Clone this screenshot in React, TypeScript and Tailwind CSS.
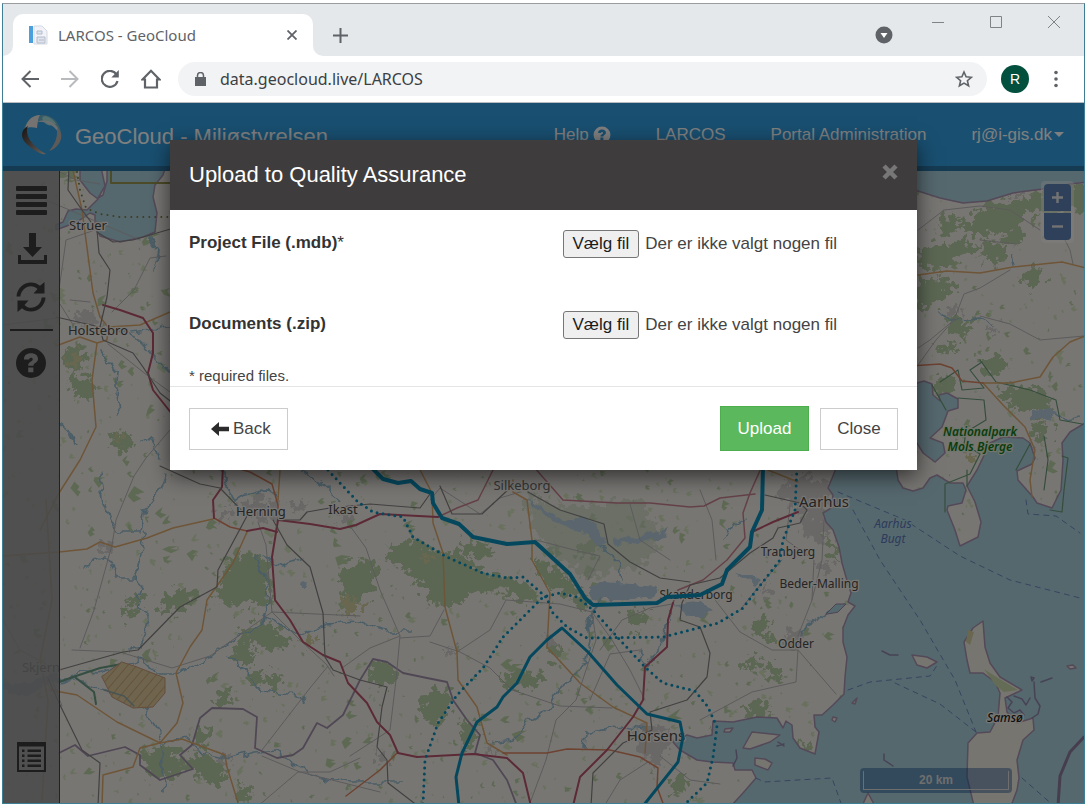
import { useRef, useState } from "react";
import type { ReactNode } from "react";

/* ---------- map data ---------- */

const seaShapes = [
  "M837 466L828 488L833 495L831 508L823 513L826 522L833 530L839 547L842 563L846 577L851 593L848 602L855 606L848 615L843 628L843 642L847 657L845 677L844 694L833 705L822 715L814 715L815 727L819 732L815 754L800 748L793 738L792 725L786 721L783 728L777 718L757 717L733 722L713 721L712 735L697 738L687 735L673 742L680 750L697 760L712 762L733 763L735 770L752 770L756 778L743 793L731 806L1090 806L1090 420L1070 432L1062 443L1063 460L1061 490L1052 508L1037 503L1033 497L1018 480L1017 471L1032 464L1035 458L1030 443L1023 438L1003 437L990 443L977 470L967 486L975 502L981 522L978 537L960 546L955 530L947 510L948 506L962 503L966 490L963 483L950 483L937 475L930 478L923 488L913 491L903 488L898 480L896 466Z",
  "M900 384L917 383L924 381L932 384L933 395L940 401L939 395L947 393L958 399L958 408L948 411L942 427L930 438L943 443L945 453L935 462L923 453L917 443L900 440Z",
  "M900 182L918 191L940 198L963 203L987 201L1013 193L1027 191L1043 189L1070 184L1090 182L1090 165L900 165Z",
  "M80 166L80 180L90 193L98 199L87 210L76 209L68 211L63 222L56 225L56 230L77 222L90 213L95 215L95 227L100 236L120 242L143 237L155 232L157 213L153 197L155 185L163 175L166 166L107 166L107 181L103 195L98 198L105 186L102 172L101 166Z",
];

const islandShapes = [
  "M983 621L973 628L964 642L967 660L970 673L983 673L995 682L1000 693L998 717L990 732L977 733L968 743L967 777L974 806L1011 806L1017 790L1019 778L1017 760L1023 740L1034 730L1033 718L1017 723L1007 712L1005 698L1022 690L1000 677L990 663L985 647Z",
  "M912 655L927 657L937 662L927 668L917 665Z",
  "M752 732L780 735L770 742L750 749L743 748Z",
  "M755 758L765 759L772 763L768 770L755 765Z",
  "M868 793L875 806L862 806Z",
  "M1067 666L1073 665L1076 668L1070 669Z",
  "M725 729L733 728L730 732L724 732Z",
  "M852 703L857 698L855 704Z",
  "M833 717L837 718L835 722L832 720Z",
];

const coastDetails = [
  "M882 651L890 655L898 655",
  "M884 754L884 760L893 766",
  "M1034 682L1035 698L1040 706L1038 714L1032 718M1041 682L1052 678M1031 677L1034 678L1032 681Z",
  "M736 750L737 758L733 766",
  "M778 742L784 746M777 746L784 744",
  "M1007 697L1012 702L1008 708L1014 713L1020 710L1024 715M1014 696L1022 699L1026 705L1030 698",
];

const urbanAreas = [
  "M76 315L90 310L99 318L97 326L84 325L74 321Z",
  "M240 502L262 497L280 505L278 520L258 522L243 514Z",
  "M288 502L304 503L301 512L291 510Z",
  "M336 514L352 512L352 522L340 524Z",
  "M218 510L232 509L229 519L219 518Z",
  "M96 545L110 543L112 552L100 556Z",
  "M790 478L826 480L832 500L820 512L830 526L824 542L808 540L800 528L806 516L790 506L778 490Z",
  "M822 560L834 564L828 574L818 570Z",
  "M785 632L800 628L804 644L788 650Z",
  "M764 585L773 588L768 596L761 592Z",
  "M645 724L672 730L668 752L652 768L640 750L634 740Z",
  "M450 645L458 650L450 656L444 652Z",
  "M546 634L556 642L548 650L543 642Z",
  "M488 742L498 746L492 754L486 750Z",
  "M946 308L958 304L960 314L948 316Z",
  "M988 328L998 326L996 336L988 334Z",
  "M1010 192L1024 190L1020 197L1012 197Z",
  "M1018 438L1030 444L1028 452L1024 446Z",
  "M216 754L232 752L230 761L218 760Z",
  "M376 748L388 752L384 766L376 760Z",
];

const forests = [
  "M236 557L259 555L268 566L268 590L266 604L245 601L232 608L218 592L226 582L228 566Z",
  "M75 380L88 378L97 386L90 396L76 394L70 386Z",
  "M66 350L80 346L84 362L76 374L68 366Z",
  "M112 436L127 432L135 444L124 452L114 446Z",
  "M164 600L180 590L196 592L190 604L170 610L162 614Z",
  "M122 610L136 607L132 618L120 614Z",
  "M128 596L144 598L140 608L130 602Z",
  "M146 752L166 748L180 756L192 768L162 779L146 772Z",
  "M186 756L206 758L228 770L216 784L198 774Z",
  "M238 783L251 794L246 803L238 803Z",
  "M243 632L262 620L278 632L290 640L280 650L262 644L248 646Z",
  "M235 648L246 646L256 656L248 664L238 660Z",
  "M248 674L258 672L262 682L252 684Z",
  "M219 693L229 691L228 704L218 702Z",
  "M195 728L206 732L207 746L196 744Z",
  "M270 672L282 680L276 690L266 684Z",
  "M392 546L416 540L430 550L460 556L480 572L500 576L522 584L536 594L528 604L510 590L486 590L470 590L462 602L446 604L430 604L426 588L414 582L404 566L388 562Z",
  "M344 568L372 560L376 576L370 592L354 602L342 590Z",
  "M534 560L548 566L560 574L572 582L590 600L584 610L566 592L548 586L540 572Z",
  "M462 542L486 546L496 552L484 556L464 552Z",
  "M630 612L646 614L648 624L636 628L628 622Z",
  "M548 640L562 648L560 660L552 658Z",
  "M500 676L528 672L542 676L534 686L508 688Z",
  "M372 666L388 664L398 674L390 684L376 680L368 676Z",
  "M421 698L444 690L452 704L446 716L430 724L424 712Z",
  "M464 722L477 734L472 746L462 744Z",
  "M670 780L684 776L686 788L674 794Z",
  "M576 548L596 540L590 556L580 554Z",
  "M750 624L768 618L762 630L774 638L756 634Z",
  "M746 660L758 656L756 668L744 668Z",
  "M765 660L776 668L784 678L772 678Z",
  "M744 708L758 702L772 712L760 718L746 714Z",
  "M940 222L956 214L958 228L944 232Z",
  "M918 254L938 246L964 242L976 244L962 256L950 264L936 268L918 266Z",
  "M918 282L938 278L956 284L944 298L926 308L918 300Z",
  "M960 226L990 206L1030 200L1040 206L1020 216L1014 230L1024 236L1016 244L994 232L976 234Z",
  "M984 244L1004 244L1000 262L984 260Z",
  "M1030 196L1074 186L1090 188L1090 208L1060 210L1040 214Z",
  "M1022 274L1036 270L1042 280L1028 286Z",
  "M950 318L972 324L966 336L952 332Z",
  "M978 360L1000 356L1004 370L986 376Z",
  "M1000 386L1030 388L1052 396L1048 414L1022 410L1006 400Z",
  "M1034 424L1048 424L1044 440L1034 436Z",
  "M936 346L952 344L956 350L940 354Z",
  "M932 384L950 376L958 384L948 392L936 392Z",
  "M826 538L836 548L840 562L832 552Z",
  "M800 742L814 752L808 752Z",
  "M720 725L730 735L716 738L714 728Z",
];

const heaths = [
  "M344 596L362 604L356 616L342 612Z",
  "M75 350L80 362L76 370L70 360Z",
  "M114 436L126 434L122 446Z",
  "M302 638L318 636L312 646L300 644Z",
  "M420 552L436 560L426 562Z",
  "M964 456L974 454L972 464L966 462Z",
];

const lakes = [
  "M590 586L604 582L632 584L660 586L656 596L622 600L600 600L590 596Z",
  "M610 540L634 536L650 534L668 528L664 536L640 542L614 544Z",
  "M525 498L545 510L564 520L590 520L598 530L606 544L598 546L588 534L572 530L550 520L534 508Z",
  "M678 604L700 602L714 608L704 616L688 616L680 612Z",
  "M1032 410L1050 408L1056 414L1044 420L1032 420Z",
  "M300 582L308 580L306 586L299 586Z",
  "M734 572L748 574L762 580L756 586L744 578Z",
  "M3 685L30 682L60 668L58 680L30 692L3 692Z",
];

const rivers = [
  "M59 680L72 678L80 670L98 672L122 666L142 658L158 672L176 672L206 662L226 644L248 632L264 622L268 605L266 578L256 556",
  "M59 682L76 678L100 690L120 694L136 704L148 710L155 728L164 742L188 738L200 752L230 758L256 752L276 750L290 762L320 778L350 782L400 782",
  "M100 475L104 505L118 532L140 532L144 510L160 490L166 475",
  "M144 532L140 560L134 578L118 578L106 556L84 568",
  "M134 578L144 590L138 606L150 618L144 640L132 652",
  "M220 470L234 500L244 494L264 490L278 496",
  "M226 656L244 670L260 692L300 696L304 704",
  "M262 556L280 566L300 560",
  "M264 616L300 636L326 624L360 622L386 632L412 632",
  "M102 350L110 362L118 372L116 396L118 412",
  "M120 330L140 340L170 372M130 332L150 330L170 324",
  "M150 238L158 250L154 272",
  "M59 424L70 432L76 444",
  "M140 438L152 440L160 460",
  "M162 744L164 790",
  "M300 472L320 482L340 500",
  "M494 744L514 740L528 722L548 708L558 690L572 678L586 660L590 640L588 620L600 600",
  "M585 748L586 734L620 726L646 730",
  "M845 605L836 607L826 614L808 624L800 636",
  "M746 520L730 526L724 538",
  "M940 314L956 320L980 318L994 326",
  "M1012 254L1014 264",
  "M1054 416L1066 420L1078 416",
  "M600 546L618 560L622 580",
  "M640 650L648 668L664 636L672 612",
];

const minorRoads = [
  "M60 172L76 180L100 184",
  "M59 290L66 240L95 230",
  "M60 304L80 336M90 302L70 300",
  "M166 256L150 258L134 290L112 312",
  "M108 344L148 376L170 392",
  "M170 430L146 458L134 476L116 520L112 545L94 610L80 648M72 650L120 652L172 668L210 656L272 612L360 616",
  "M272 612L300 640L326 664L334 676",
  "M328 666L310 688L296 706L262 750M262 756L300 772L380 792M298 772L258 806M298 772L330 772L360 758",
  "M258 522L266 545L272 612",
  "M350 526L366 548L380 590L400 636L370 648L342 668M400 638L430 636L444 610",
  "M400 636L396 680L390 730L350 756",
  "M430 642L460 652L490 668L512 690L560 706L612 708",
  "M457 652L490 630L506 600L560 604L592 612",
  "M592 612L596 640L576 700L556 720L546 760L530 803",
  "M592 612L612 640L630 670L645 700",
  "M600 650L622 620L650 608L672 604",
  "M536 540L574 550L600 556L588 580",
  "M430 500L440 488L480 514L500 498L520 492",
  "M630 504L640 540L670 560",
  "M712 596L740 632L772 650L798 650L836 694M798 650L796 682L752 692L700 720",
  "M790 506L786 540L814 560L812 600L798 636",
  "M824 520L822 560L812 600",
  "M740 610L756 590L782 560",
  "M716 560L712 520L700 490",
  "M918 230L944 210L980 206L1010 210L1040 230",
  "M918 365L936 340L954 320L964 294L980 288L1010 270",
  "M954 320L930 340L918 348M980 316L1010 324L1040 340L1084 336",
  "M1060 230L1070 250L1073 264",
  "M980 240L1016 244",
  "M640 650L610 654L590 700",
  "M648 762L620 780L606 803M660 756L690 780L720 784",
  "M3 620L20 650L46 664L62 706M46 200L140 240M3 325L58 318",
];

const secondaryRoads = [
  "M72 166L82 210L93 293L100 317L108 327L107 340L97 343L92 380L96 427L80 460L59 493L40 530",
  "M56 346L80 337L97 343M108 327L140 325L170 312",
  "M3 556L59 552L87 549L100 542L115 547L147 538L173 528L213 519",
  "M247 532L233 563L207 600L202 630L190 647L176 673L183 703L177 723L160 743",
  "M50 690L77 695L117 722L160 743L140 748L133 767L103 775L102 806",
  "M160 743L182 739L225 755L227 767L239 806",
  "M280 470L278 500",
  "M418 466L432 493L433 523L443 553L445 607L457 652L458 680L477 707L487 743L507 755",
  "M513 480L513 492L527 500L532 540L532 560L550 593L547 647L580 683L613 707L647 723L645 753",
  "M918 275L947 271L980 273L1013 267L1062 262L1090 269",
  "M983 383L1010 383L1040 377L1053 357L1070 342L1090 334",
  "M983 383L1003 405L1025 427L1035 450L1030 480L1032 497",
  "M768 470L798 482",
  "M46 500L52 600L40 660L48 700L42 800",
];

const primaryRoads = [
  "M503 753L547 753L567 749L610 750L640 757L658 768L657 787L664 806",
  "M346 796L380 770L398 752",
  "M910 366L940 364L952 368L962 381L983 383",
  "M230 466L250 472L272 484L278 505L278 520",
  "M214 518L230 527L247 531",
];

const motorways = [
  "M103 305L120 310L143 318L153 333L153 353L148 373L153 390L172 414",
  "M223 466L222 487L213 500L214 518M247 531L263 528L277 532",
  "M278 520L272 557L275 600L290 620L303 642L323 655L340 662L348 683L367 703L377 722L390 735L398 753L417 757L473 754L507 758L523 773L531 806",
  "M278 520L310 524L340 529L356 525L380 514L438 517",
  "M573 806L580 777L607 750L633 717L643 700L645 667L667 647L668 620L673 603",
  "M752 532L773 522L798 512",
];

const expressways = [
  "M438 517L457 508L478 500L495 466",
  "M673 603L678 590L703 580L727 560L745 538L743 513L750 493L762 466",
  "M533 466L563 500L617 503L650 503L690 507L704 506L720 498L755 494",
];

const railways = [
  "M69 166L68 190L82 210L97 230L99 253L110 270L107 297L100 327L103 340L133 353L143 367L160 393L174 404",
  "M97 232L113 242L133 240L174 228M56 317L100 327",
  "M160 466L200 484L220 488L247 516L218 570L217 587L180 607L138 650L123 652L59 670",
  "M273 520L287 545L310 567L323 613L325 657L333 670L360 680L387 687L382 707L377 747L387 760L388 783L418 806",
  "M48 678L59 703L82 750L100 763L98 806",
  "M278 520L300 520L307 512L330 508L370 504L420 508L430 494",
  "M690 585L682 603L680 620L700 627L710 653L707 677L687 700L650 712L652 730L623 743L593 773L591 806",
  "M690 585L720 578L750 553L773 538L778 528L800 523L807 510L800 503L765 495",
  "M440 486L452 514L482 514L512 486M528 492L560 510L604 524L608 544L630 562L660 578L690 582",
];

const municipalBorder =
  "M59 753L75 745L88 756L125 747L140 755L140 765L160 780L193 769L180 755L192 745L200 718L212 708L243 709L257 717L255 748L277 758L293 755L303 748L317 723L327 728L343 715L360 680L373 659L387 662L403 673L427 678L447 682L453 700L467 720L480 735L475 753L493 760L507 780L517 806";

const ferries = [
  "M838 492L905 520L960 556L1010 580L1080 598",
  "M853 510L880 560L920 620L955 680L976 732",
  "M848 690L870 682L930 676L938 664M895 683L940 704L976 732",
  "M1026 500L1028 514L1056 516L1080 533",
  "M756 778L764 782L832 778L842 806M1022 778L1054 806",
];

const parkOutline = [
  "M932 385L946 410M958 398L984 400L986 420L966 432L964 444L980 454L970 474L945 484L945 512M967 486L967 470",
  "M980 360L996 382L1030 390L1056 400L1060 420L1082 424M1030 444L1016 470M1044 436L1048 460L1044 490",
  "M1062 456L1068 458L1064 490L1062 512L1050 510M940 382L958 370L962 390L984 388L970 370L982 362",
];

const thickRoute =
  "M370 466L383 479L398 483L411 481L420 489L432 493L433 503L442 518L459 524L473 537L507 544L535 542L570 574L585 598L593 605L657 603L667 597L700 595L722 584L727 570L750 547L752 532L762 510L763 466";
const thinRoute =
  "M459 806L456 777L462 753L477 722L497 707L503 697L517 683L530 657L547 640L562 628L588 652L617 685L647 714L680 722L683 737L678 762L643 806";
const dottedRoutes = [
  "M328 470L340 483L358 502L373 512L403 517L413 537L447 557L483 573L507 578L523 577L538 590L547 598L552 612L567 627L587 638L663 637L718 623L743 608L755 592L780 560L783 540L795 510L797 466",
  "M423 804L425 760L438 723L457 695L483 668L503 637L543 597L560 593L577 597L593 610L620 640L645 667L663 683L695 691L708 707L717 727L713 757L707 783L685 804",
];

type Label = { text: string; x: number; y: number; size: number; kind?: "park" | "water" | "faint" | "island" };

const labels: Label[] = [
  { text: "Struer", x: 88, y: 230, size: 13 },
  { text: "Holstebro", x: 98, y: 335, size: 13 },
  { text: "Herning", x: 261, y: 516, size: 13 },
  { text: "Ikast", x: 343, y: 514, size: 13 },
  { text: "Silkeborg", x: 522, y: 490, size: 13, kind: "faint" },
  { text: "Aarhus", x: 824, y: 507, size: 15 },
  { text: "Tranbjerg", x: 788, y: 556, size: 12 },
  { text: "Beder-Malling", x: 819, y: 588, size: 12 },
  { text: "Odder", x: 796, y: 648, size: 12 },
  { text: "Horsens", x: 656, y: 741, size: 15 },
  { text: "Samsø", x: 1005, y: 722, size: 12, kind: "island" },
  { text: "Aarhus", x: 893, y: 528, size: 12, kind: "water" },
  { text: "Bugt", x: 893, y: 543, size: 12, kind: "water" },
  { text: "Nationalpark", x: 980, y: 436, size: 12, kind: "park" },
  { text: "Mols Bjerge", x: 980, y: 451, size: 12, kind: "park" },
];

const labelStyles = {
  plain: "fill-[#4a4a4a] stroke-[#f2efe9]",
  faint: "fill-[#6a6a6a] stroke-[#f2efe9]",
  water: "fill-[#5d76b4] stroke-[#aad3df] italic",
  park: "fill-[#157a1c] stroke-[#e3ecd8] italic font-semibold",
  island: "fill-[#1c1c1c] stroke-[#f2efe9] italic font-medium",
};

/* Small woodland patches scattered over the land, from a seeded generator. */
function makeSpecks(count: number, seed: number, maxSize: number) {
  let s = seed;
  const next = () => {
    s = (s * 1664525 + 1013904223) % 4294967296;
    return s / 4294967296;
  };
  let d = "";
  for (let i = 0; i < count; i++) {
    const x = 3 + next() * 1081;
    const y = 171 + next() * 632;
    const r = 1 + next() * next() * maxSize;
    d += `M${x.toFixed(1)} ${y.toFixed(1)}`;
    for (let k = 0; k < 5; k++) {
      const a = (k / 5) * 6.28 + next();
      const q = r * (0.5 + next());
      d += `L${(x + Math.cos(a) * q).toFixed(1)} ${(y + Math.sin(a) * q).toFixed(1)}`;
    }
    d += "Z";
  }
  return d;
}

const woodSpecks = makeSpecks(900, 11, 7);
const meadowSpecks = makeSpecks(1500, 77, 4);

function Paths({ items, className }: { items: string[]; className: string }) {
  return (
    <g className={className}>
      {items.map((d) => (
        <path key={d} d={d} />
      ))}
    </g>
  );
}

function MapCanvas() {
  return (
    <svg
      viewBox="3 171 1081 632"
      preserveAspectRatio="xMidYMid slice"
      className="absolute inset-0 size-full"
      fill="none"
      strokeLinejoin="round"
      strokeLinecap="round"
      role="img"
      aria-label="Map"
    >
      <defs>
        <pattern id="hatch" width="7" height="7" patternUnits="userSpaceOnUse" patternTransform="rotate(40)">
          <rect width="7" height="7" fill="#dfc99a" />
          <path d="M0 0V7" stroke="#c9a878" strokeWidth="2" />
        </pattern>
        <filter id="ragged" x="-5%" y="-5%" width="110%" height="110%">
          <feTurbulence type="fractalNoise" baseFrequency="0.13" numOctaves="3" seed="4" />
          <feDisplacementMap in="SourceGraphic" scale="26" xChannelSelector="R" yChannelSelector="G" />
        </filter>
        <filter id="wavy" x="-5%" y="-5%" width="110%" height="110%">
          <feTurbulence type="fractalNoise" baseFrequency="0.09" numOctaves="2" seed="9" />
          <feDisplacementMap in="SourceGraphic" scale="12" xChannelSelector="R" yChannelSelector="G" />
        </filter>
      </defs>
      <rect x="-400" y="-400" width="1900" height="1900" className="fill-[#f0ede6]" />
      <path d={meadowSpecks} className="fill-[#d2e3bd]" />
      <path d={woodSpecks} className="fill-[#bdd3a9]" />
      <g filter="url(#ragged)">
        <Paths items={forests} className="fill-[#b9cfa6] stroke-[#b9cfa6] stroke-[3]" />
        <Paths items={heaths} className="fill-[#d3cf9f]" />
        <Paths items={urbanAreas} className="fill-[#d5d1cf]" />
        <path
          d="M520 490L560 506L640 500L660 530L650 560L590 580L560 560L534 530Z"
          className="fill-[#c5d3bd] opacity-60"
        />
      </g>
      <g filter="url(#wavy)">
        <Paths items={lakes} className="fill-[#b4cbdc]" />
        <Paths items={rivers} className="stroke-[#96bccf] stroke-[1.7]" />
      </g>
      <Paths items={seaShapes} className="fill-[#aad0dc] stroke-[#a892b0] stroke-[1.5]" />
      <Paths items={islandShapes} className="fill-[#eeebe0] stroke-[#a892b0] stroke-[1.5]" />
      <path d="M984 669L998 678L1018 690L1004 692L996 686Z" className="fill-[#c9d8ac]" />
      <path d="M968 630L974 632L970 645L966 642Z" className="fill-[#d3cf9f]" />
      <Paths items={coastDetails} className="stroke-[#8f86ac] stroke-[1.5]" />
      <path d="M826 614L836 604L846 604L838 612Z" className="fill-[#aad0dc] stroke-[#9a86aa]" />
      <path d="M1084 737L1070 752L1060 776L1058 806" className="stroke-[#8c7a9e] stroke-[3]" />
      <path d={municipalBorder} className="stroke-[#a08fa8] stroke-[1.8]" />
      <Paths items={parkOutline} className="stroke-[#6b9b78] stroke-[1.2]" />
      <Paths items={minorRoads} className="stroke-[#b9b6b8] stroke-[1]" />
      <Paths items={secondaryRoads} className="stroke-[#dcaa70] stroke-[1.5]" />
      <Paths items={primaryRoads} className="stroke-[#da8562] stroke-[1.5]" />
      <Paths items={expressways} className="stroke-[#c98390] stroke-[1.5]" />
      <Paths items={motorways} className="stroke-[#b8546c] stroke-[2]" />
      <Paths items={railways} className="stroke-[#848282] stroke-[1.2]" />
      <path
        d="M59 682L76 676L100 668L122 664M76 678L94 692L96 704"
        className="stroke-[#6b9c84] stroke-[2]"
      />
      <path
        d="M122 662L137 667L165 678L165 693L153 707L133 708L112 697L102 677Z"
        fill="url(#hatch)"
        className="stroke-[#c99a78]"
      />
      <path d="M104 690L124 696L134 706" className="stroke-[#93a8a8] stroke-[1.5]" />
      <Paths items={ferries} className="stroke-[#7287c0] stroke-[1] [stroke-dasharray:5_5]" />
      <path d="M111 166V183H200" className="stroke-[#9a9850] stroke-[2]" />
      <path
        d="M77 172L80 190L86 208L100 214L120 217H180"
        className="stroke-[#7d7c40] stroke-[2] [stroke-dasharray:0_6]"
      />
      <g className="[paint-order:stroke] stroke-[2.5]" fontFamily='"Noto Sans", sans-serif' textAnchor="middle">
        {labels.map((l) => (
          <text key={l.text + l.y} x={l.x} y={l.y} fontSize={l.size} className={labelStyles[l.kind ?? "plain"]}>
            {l.text}
          </text>
        ))}
        <text x="696" y="599" fontSize="12" className={labelStyles.plain}>
          Skanderborg
        </text>
        <text x="41" y="672" fontSize="13" className={labelStyles.plain}>
          Skjern
        </text>
      </g>
      <Paths items={dottedRoutes} className="stroke-[#0a90bc] stroke-[3] [stroke-dasharray:0_6]" />
      <path d={thinRoute} className="stroke-[#0a90bc] stroke-[3]" />
      <path d={thickRoute} className="stroke-[#0a90bc] stroke-[4]" />
    </svg>
  );
}

/* ---------- icons ---------- */

function Svg({ box, className, children }: { box: string; className: string; children: ReactNode }) {
  return (
    <svg viewBox={box} className={className} fill="currentColor" aria-hidden="true">
      {children}
    </svg>
  );
}

function QuestionIcon({ className }: { className: string }) {
  return (
    <Svg box="0 0 32 32" className={className}>
      <path
        fillRule="evenodd"
        d="M16 1a15 15 0 1 0 0 30a15 15 0 1 0 0-30ZM13.2 20.5h5.2v4.8h-5.2ZM9 12.5C9 8.500 11.500 6.300 16 6.300C20.500 6.300 23 8.600 23 12C23 15.500 18.400 16 18.400 18.800H13.200C13.200 14.600 17.800 14.600 17.800 12.300C17.800 11.200 17 10.700 16 10.700C14.800 10.700 14.200 11.400 14.200 12.500Z"
      />
    </Svg>
  );
}

function LogoIcon() {
  return (
    <svg viewBox="0 0 42 42" className="h-[42px] w-[42px]" aria-hidden="true">
      <defs>
        <linearGradient id="band" x1="0" y1="0" x2="1" y2="1">
          <stop offset="0" stopColor="#2e2724" />
          <stop offset="0.6" stopColor="#8a7c74" />
          <stop offset="1" stopColor="#cfc8c2" />
        </linearGradient>
      </defs>
      <path d="M2 18C4 8 11 1 21 1C32 1 39 9 40 19C35 11 27 7 19 8C11 8 6 12 2 18Z" fill="#6cb6ce" />
      <path d="M10 4C13 2 16 1 19 1C17 4 17 7 16 14C11 13 7 13 4 15C5 10 7 7 10 4Z" fill="#e9e6e4" />
      <path d="M24 2C29 3 33 6 35 10C31 11 28 13 24 9C21 6 20 3 24 2Z" fill="#a8e0de" />
      <path d="M16 8C25 7 34 11 40 23C39 16 36 11 32 9C27 6 21 6 16 8Z" fill="#d9dfe2" />
      <path d="M1 21C1 17 3 14 7 12C4 18 7 30 25 40C22 41 17 39 12 35C5 30 1 26 1 21Z" fill="url(#band)" />
      <path d="M36 14C40 17 41 20 40 25C38 31 34 35 28 37C33 31 37 25 36 14Z" fill="#bdb5b0" />
    </svg>
  );
}

function SideButton({ label, children }: { label: string; children: ReactNode }) {
  return (
    <button type="button" aria-label={label} className="size-8 text-[#3a3a3a]">
      {children}
    </button>
  );
}

/* ---------- browser window ---------- */

function BrowserChrome() {
  return (
    <div className="border-b border-[#b9bcc0] bg-white text-[#5f6368]">
      <div className="flex h-[52px] bg-[#e5e8eb]">
        <div className="w-2.5 bg-white">
          <div className="h-full rounded-br-[10px] bg-[#e5e8eb]" />
        </div>
        <div className="bg-[#e5e8eb] pt-2.5">
          <div className="flex h-[42px] w-[300px] items-center rounded-t-[10px] bg-white pr-3 pl-[15px]">
            <svg viewBox="0 0 20 20" className="size-5" aria-hidden="true">
              <path d="M1 1H5V18H1Z" fill="#4b9fdc" />
              <path d="M6 1H14L19 6V19H6Z" fill="#f1f3f8" stroke="#d5dae2" />
              <path d="M9 6H14V9H9ZM9 12H17V18H9Z" fill="#dfe4ee" stroke="#b4bccb" />
              <path d="M11 15H16" stroke="#b4bccb" />
            </svg>
            <span className="ml-2.5 grow font-['Noto_Sans',sans-serif] text-[15px]">LARCOS - GeoCloud</span>
            <button type="button" aria-label="Close tab" className="p-1">
              <svg viewBox="0 0 10 10" className="size-2.5" stroke="currentColor" strokeWidth="1.8">
                <path d="M0.500 0.500L9.500 9.500M9.500 0.500L0.500 9.500" />
              </svg>
            </button>
          </div>
        </div>
        <div className="w-2.5 bg-white">
          <div className="h-full rounded-bl-[10px] bg-[#e5e8eb]" />
        </div>
        <button type="button" aria-label="New tab" className="mt-[11px] ml-2.5 h-10">
          <svg viewBox="0 0 15 15" className="size-[15px]" stroke="currentColor" strokeWidth="2">
            <path d="M7.500 0V15M0 7.500H15" />
          </svg>
        </button>
        <div className="ml-auto flex items-start pr-6">
          <button type="button" aria-label="Search tabs" className="mt-[22px] mr-[39px]">
            <Svg box="0 0 18 18" className="size-[18px]">
              <circle cx="9" cy="9" r="8.500" />
              <path d="M5.500 7H12.500L9 12Z" fill="#fff" />
            </Svg>
          </button>
          <div className="mt-3 flex gap-[46px] text-[#808386]">
            <button type="button" aria-label="Minimize">
              <svg viewBox="0 0 12 12" className="size-3" stroke="currentColor">
                <path d="M0 6.500H12" />
              </svg>
            </button>
            <button type="button" aria-label="Maximize">
              <svg viewBox="0 0 12 12" className="size-3" stroke="currentColor" fill="none">
                <path d="M0.500 0.500H11.500V11.500H0.500Z" />
              </svg>
            </button>
            <button type="button" aria-label="Close window">
              <svg viewBox="0 0 12 12" className="size-3" stroke="currentColor">
                <path d="M0 0L12 12M12 0L0 12" />
              </svg>
            </button>
          </div>
        </div>
      </div>

      <div className="flex h-[46px] items-center pr-[26px] pl-[18px]">
        <div className="flex gap-[22px]">
          <button type="button" aria-label="Back in history">
            <svg viewBox="0 0 18 18" className="size-[18px]" fill="none" stroke="currentColor" strokeWidth="2">
              <path d="M18 9H2M9.500 1L1.500 9L9.500 17" />
            </svg>
          </button>
          <button type="button" aria-label="Forward in history" className="text-[#b8babd]">
            <svg viewBox="0 0 18 18" className="size-[18px]" fill="none" stroke="currentColor" strokeWidth="2">
              <path d="M0 9H16M8.500 1L16.500 9L8.500 17" />
            </svg>
          </button>
          <button type="button" aria-label="Reload">
            <svg viewBox="0 0 18 18" className="size-[18px]" fill="none" stroke="currentColor" strokeWidth="2.2">
              <path d="M15.500 4.500A8 8 0 1 0 16.500 11" />
              <path d="M17.800 0V7.500H10.300Z" fill="currentColor" stroke="none" />
            </svg>
          </button>
          <button type="button" aria-label="Home">
            <svg viewBox="0 0 20 20" className="size-5" fill="none" stroke="currentColor" strokeWidth="2.2">
              <path d="M1.500 10.500L10 1.800L18.500 10.500H16V18.500H4V10.500Z" />
            </svg>
          </button>
        </div>
        <div className="ml-[17px] flex h-[34px] grow items-center rounded-full bg-[#f1f3f4] pr-3.5 pl-[17px]">
          <Svg box="0 0 11 14" className="h-3.5 w-[11px]">
            <path d="M0 5H11V14H0Z" />
            <path d="M2.500 5V3.500A3 3 0 0 1 8.500 3.500V5" fill="none" stroke="currentColor" strokeWidth="1.500" />
          </Svg>
          <input
            aria-label="Address"
            defaultValue="data.geocloud.live/LARCOS"
            className="ml-3.5 min-w-0 grow bg-transparent font-['Noto_Sans',sans-serif] text-[16px] text-[#3c4043] outline-none"
          />
          <button type="button" aria-label="Bookmark">
            <svg viewBox="0 0 18 18" className="size-[18px]" fill="none" stroke="currentColor" strokeWidth="1.6">
              <path d="M9 2L11.100 6.800L16.300 7.300L12.400 10.700L13.600 15.800L9 13.100L4.400 15.800L5.600 10.700L1.700 7.300L6.900 6.800Z" />
            </svg>
          </button>
        </div>
        <button
          type="button"
          aria-label="Profile"
          className="ml-3.5 size-7 rounded-full bg-[#04503f] font-['Liberation_Sans',sans-serif] text-[14px] text-white"
        >
          R
        </button>
        <button type="button" aria-label="Browser menu" className="ml-[25px]">
          <Svg box="0 0 4 18" className="h-[18px] w-1">
            <circle cx="2" cy="2.500" r="1.800" />
            <circle cx="2" cy="9" r="1.800" />
            <circle cx="2" cy="15.500" r="1.800" />
          </Svg>
        </button>
      </div>
    </div>
  );
}

/* ---------- application ---------- */

function AppHeader() {
  return (
    <header className="flex items-center border-b-[5px] border-[#2a76a6] bg-[#339ee0] pr-5 pl-[18px] text-white">
      <div className="flex h-[63px] items-center">
        <LogoIcon />
        <h1 className="ml-3 pt-1 text-[22px] leading-7">GeoCloud - Miljøstyrelsen</h1>
      </div>
      <nav className="ml-auto flex gap-[45px] text-[17px] leading-6">
        <a href="#help" className="flex items-center gap-1">
          Help <QuestionIcon className="size-[18px]" />
        </a>
        <a href="#larcos">LARCOS</a>
        <a href="#admin">Portal Administration</a>
        <a href="#user" className="flex items-center gap-0.5">
          rj@i-gis.dk
          <Svg box="0 0 10 5" className="h-[5px] w-2.5">
            <path d="M0 0H10L5 5Z" />
          </Svg>
        </a>
      </nav>
    </header>
  );
}

function SideBar() {
  return (
    <aside className="relative flex w-[57px] flex-col items-center gap-4 border-r border-[#444] bg-[#939393]/85 pt-3.5 pb-[30px]">
      <SideButton label="Layers">
        <Svg box="0 0 32 32" className="size-8">
          <rect x="1" y="1" width="31" height="5" rx="1" />
          <rect x="1" y="9" width="31" height="5" rx="1" />
          <rect x="1" y="17" width="31" height="5" rx="1" />
          <rect x="1" y="25" width="31" height="5" rx="1" />
        </Svg>
      </SideButton>
      <SideButton label="Download">
        <Svg box="0 0 32 32" className="size-8">
          <path d="M14 0H21V14H27L17.500 24L8 14H14ZM3 22H6V27H29V22H32V31H3Z" />
        </Svg>
      </SideButton>
      <SideButton label="Refresh">
        <Svg box="0 0 32 32" className="size-8">
          <path d="M1.500 15.500C2 7.500 8.500 1.500 16 1.500C19.500 1.500 22.500 2.700 25 4.800L29.500 1V12.500H18.500L22.500 8C20.500 6 18.500 5.200 16 5.200C10.500 5.200 6 9.500 5.300 15.500ZM30.500 16.500C30 24.500 23.500 30.500 16 30.500C12.500 30.500 9.500 29.300 7 27.200L2.500 31V19.500H13.500L9.500 24C11.500 26 13.500 26.800 16 26.800C21.500 26.800 26 22.500 26.700 16.500Z" />
        </Svg>
      </SideButton>
      <hr className="h-0.5 w-[43px] border-0 bg-[#3a3a3a]" />
      <SideButton label="Help">
        <QuestionIcon className="size-8" />
      </SideButton>
      <div className="mt-auto h-8">
        <SideButton label="Legend">
          <Svg box="0 0 32 32" className="size-8">
            <path
              fillRule="evenodd"
              d="M2 1H31V31H2ZM4 5.500V29H29V5.500ZM7 8.500H9.500V11H7ZM12.500 8.500H26V11H12.500ZM7 13.500H9.500V16H7ZM12.500 13.500H26V16H12.500ZM7 18.500H9.500V21H7ZM12.500 18.500H26V21H12.500ZM7 23.500H9.500V26H7ZM12.500 23.500H26V26H12.500Z"
            />
          </Svg>
        </SideButton>
      </div>
    </aside>
  );
}

function MapControls() {
  return (
    <div className="relative flex grow flex-col items-end justify-between">
      <div className="mt-2.5 mr-2.5 flex flex-col gap-0.5 rounded bg-white/40 p-[3px] text-[#e6e6e6]">
        <button
          type="button"
          aria-label="Zoom in"
          className="flex size-[27px] items-center justify-center rounded-t-sm bg-[#5f83b4]"
        >
          <svg viewBox="0 0 11 11" className="size-[11px]" stroke="currentColor" strokeWidth="2.400">
            <path d="M0 5.500H11M5.500 0V11" />
          </svg>
        </button>
        <button
          type="button"
          aria-label="Zoom out"
          className="flex size-[27px] items-center justify-center rounded-b-sm bg-[#5f83b4]"
        >
          <svg viewBox="0 0 11 11" className="size-[11px]" stroke="currentColor" strokeWidth="2.400">
            <path d="M0 5.500H11" />
          </svg>
        </button>
      </div>
      <div className="mr-[72px] mb-2.5 rounded bg-[#003c88]/40 p-[3px]">
        <div className="w-[146px] border border-t-0 border-[#dcdcdc] text-center text-[12px] leading-[18px] font-bold text-[#dcdcdc]">
          20 km
        </div>
      </div>
    </div>
  );
}

function FileRow({ id, title, required }: { id: string; title: string; required?: boolean }) {
  const inputRef = useRef<HTMLInputElement>(null);
  const [fileName, setFileName] = useState("Der er ikke valgt nogen fil");
  return (
    <div className="grid grid-cols-2">
      <div className="px-[19px] pt-px">
        <label htmlFor={id} className="font-bold text-[#333]">
          {title}
          {required && <span className="font-normal">*</span>}
        </label>
      </div>
      <div className="flex items-center gap-1.5 px-[19px]">
        <button
          type="button"
          onClick={() => inputRef.current?.click()}
          className="h-7 rounded-[3px] border border-[#767676] bg-[#efefef] px-[9px] text-[#1c1c1c]"
        >
          Vælg fil
        </button>
        <span>{fileName}</span>
        <input
          ref={inputRef}
          id={id}
          type="file"
          className="sr-only"
          onChange={(e) => setFileName(e.target.files?.[0]?.name ?? "Der er ikke valgt nogen fil")}
        />
      </div>
    </div>
  );
}

function UploadDialog() {
  return (
    <div className="absolute inset-0 flex items-start justify-center bg-black/50 pt-[37px]">
      <section
        role="dialog"
        aria-labelledby="dialog-title"
        className="w-full max-w-[747px] bg-white text-[17px] leading-6 text-[#444] shadow-[0_6px_20px_rgba(0,0,0,0.6)]"
      >
        <div className="flex items-start justify-between bg-[#3f3c3d] px-[19px] py-5">
          <h2 id="dialog-title" className="text-[22px] leading-[30px] text-white">
            Upload to Quality Assurance
          </h2>
          <button type="button" aria-label="Dismiss" className="mt-1 text-[#787777]">
            <svg viewBox="0 0 16 16" className="size-4" stroke="currentColor" strokeWidth="4.500">
              <path d="M2 2L14 14M14 2L2 14" />
            </svg>
          </button>
        </div>
        <form onSubmit={(e) => e.preventDefault()}>
          <div className="flex flex-col gap-[53px] pt-5">
            <FileRow id="project-file" title="Project File (.mdb)" required />
            <FileRow id="documents" title="Documents (.zip)" />
          </div>
          <p className="mt-[27px] px-[19px] text-[15px] leading-5">* required files.</p>
          <div className="flex items-center border-t border-[#e5e5e5] px-[19px] py-[19px]">
            <button
              type="button"
              className="mr-auto flex h-[42px] items-center gap-1 border border-[#ccc] pr-4 pl-[21px]"
            >
              <Svg box="0 0 18 14" className="h-3.5 w-[18px]">
                <path d="M0 7L8 0V4.800H18V9.200H8V14Z" fill="#2b2b2b" />
              </Svg>
              Back
            </button>
            <button type="submit" className="h-[45px] w-[89px] border border-[#4cae4c] bg-[#5cb85c] text-white">
              Upload
            </button>
            <button type="button" className="ml-[11px] h-[42px] w-[78px] border border-[#ccc]">
              Close
            </button>
          </div>
        </form>
      </section>
    </div>
  );
}

export default function App() {
  return (
    <div className="flex min-h-screen flex-col bg-white pt-[3px] pr-[3px] pb-1 pl-0.5 font-['Liberation_Sans',Arial,sans-serif]">
      <div className="flex grow flex-col border border-[#3f7f95] border-t-[#9a9c9e]">
        <BrowserChrome />
        <div className="relative flex grow flex-col">
          <AppHeader />
          <main className="relative flex min-h-[560px] grow overflow-hidden">
            <MapCanvas />
            <SideBar />
            <MapControls />
          </main>
          <UploadDialog />
        </div>
      </div>
    </div>
  );
}
